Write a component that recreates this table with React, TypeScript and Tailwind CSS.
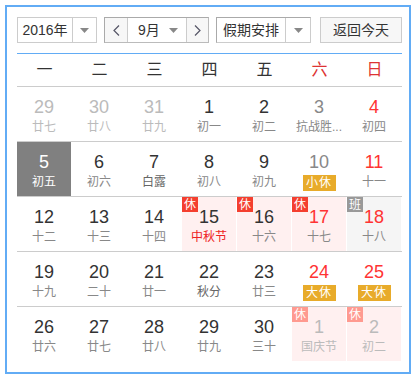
type Day = {
  n: number;
  lunar: string;
  numColor?: string;
  lunarColor?: string;
  bg?: string;
  mark?: 'rest' | 'work' | 'restLight';
  tag?: string;
  selected?: boolean;
};

const weeks: Day[][] = [
  [
    { n: 29, lunar: '廿七', numColor: 'text-[#bbb]', lunarColor: 'text-[#bbb]' },
    { n: 30, lunar: '廿八', numColor: 'text-[#bbb]', lunarColor: 'text-[#bbb]' },
    { n: 31, lunar: '廿九', numColor: 'text-[#bbb]', lunarColor: 'text-[#bbb]' },
    { n: 1, lunar: '初一' },
    { n: 2, lunar: '初二' },
    { n: 3, lunar: '抗战胜...', numColor: 'text-[#888]' },
    { n: 4, lunar: '初四', numColor: 'text-[#f33]' },
  ],
  [
    { n: 5, lunar: '初五', selected: true },
    { n: 6, lunar: '初六' },
    { n: 7, lunar: '白露', lunarColor: 'text-[#666]' },
    { n: 8, lunar: '初八' },
    { n: 9, lunar: '初九' },
    { n: 10, lunar: '初十', numColor: 'text-[#888]', tag: '小休' },
    { n: 11, lunar: '十一', numColor: 'text-[#f33]' },
  ],
  [
    { n: 12, lunar: '十二' },
    { n: 13, lunar: '十三' },
    { n: 14, lunar: '十四' },
    { n: 15, lunar: '中秋节', lunarColor: 'text-[#e22]', bg: 'bg-[#fff0f0]', mark: 'rest' },
    { n: 16, lunar: '十六', bg: 'bg-[#fff0f0]', mark: 'rest' },
    { n: 17, lunar: '十七', numColor: 'text-[#f33]', bg: 'bg-[#fff0f0]', mark: 'rest' },
    { n: 18, lunar: '十八', numColor: 'text-[#f33]', bg: 'bg-[#f5f5f5]', mark: 'work' },
  ],
  [
    { n: 19, lunar: '十九' },
    { n: 20, lunar: '二十' },
    { n: 21, lunar: '廿一' },
    { n: 22, lunar: '秋分', lunarColor: 'text-[#666]' },
    { n: 23, lunar: '廿三' },
    { n: 24, lunar: '廿四', numColor: 'text-[#f33]', tag: '大休' },
    { n: 25, lunar: '廿五', numColor: 'text-[#f33]', tag: '大休' },
  ],
  [
    { n: 26, lunar: '廿六' },
    { n: 27, lunar: '廿七' },
    { n: 28, lunar: '廿八' },
    { n: 29, lunar: '廿九' },
    { n: 30, lunar: '三十' },
    { n: 1, lunar: '国庆节', numColor: 'text-[#bbb]', lunarColor: 'text-[#bbb]', bg: 'bg-[#fff0f0]', mark: 'restLight' },
    { n: 2, lunar: '初二', numColor: 'text-[#bbb]', lunarColor: 'text-[#bbb]', bg: 'bg-[#fff0f0]', mark: 'restLight' },
  ],
];

const weekdays = ['一', '二', '三', '四', '五', '六', '日'];

function Caret() {
  return (
    <svg width="9" height="5" viewBox="0 0 9 5">
      <path d="M0 0 L9 0 L4.5 5 Z" fill="#888" />
    </svg>
  );
}

function Cell({ d }: { d: Day }) {
  let bg = d.bg ?? 'bg-white';
  let num = d.numColor ?? 'text-[#333]';
  let lunar = d.lunarColor ?? 'text-[#888]';
  if (d.selected) {
    bg = 'bg-[#808080]';
    num = 'text-white';
    lunar = 'text-white';
  }

  return (
    <div className={`relative mr-[1px] flex h-[54px] w-[54px] flex-col items-center pt-[10px] ${bg}`}>
      {d.mark === 'rest' && (
        <span className="absolute left-0 top-0 flex h-[15px] w-[16px] items-center justify-center bg-[#f43f2f] text-[12px] leading-none text-white">
          休
        </span>
      )}
      {d.mark === 'restLight' && (
        <span className="absolute left-0 top-0 flex h-[15px] w-[16px] items-center justify-center bg-[#ff9a90] text-[12px] leading-none text-white">
          休
        </span>
      )}
      {d.mark === 'work' && (
        <span className="absolute left-0 top-0 flex h-[15px] w-[16px] items-center justify-center bg-[#999] text-[12px] leading-none text-white">
          班
        </span>
      )}
      <span className={`text-[18px] leading-[20px] ${num}`}>{d.n}</span>
      {d.tag ? (
        <span className="mt-[3px] flex h-[16px] w-[33px] items-center justify-center bg-[#e8ab2a] text-[12px] leading-none tracking-[1px] text-white">
          {d.tag}
        </span>
      ) : (
        <span className={`mt-[2px] whitespace-nowrap text-[12px] leading-[16px] ${lunar}`}>{d.lunar}</span>
      )}
    </div>
  );
}

export default function App() {
  return (
    <div
      className="h-[379px] w-[415px] bg-white pl-[5px] pt-[5px]"
      style={{ fontFamily: '"Liberation Sans", "Noto Sans CJK SC", sans-serif' }}
    >
      <div className="h-[369px] w-[406px] border-2 border-[#62acf5] pl-[10px] pt-[10px]">
        {/* toolbar */}
        <div className="flex h-[26px] w-[385px] text-[14px] text-[#333]">
          <div className="flex w-[80px] border border-[#ccc] bg-white">
            <span className="flex flex-1 items-center justify-center">2016年</span>
            <span className="flex w-[24px] items-center justify-center border-l border-[#ccc]">
              <Caret />
            </span>
          </div>

          <div className="ml-[7px] flex w-[105px] border border-[#aaa] border-b-[#bbb] border-r-[#bbb]">
            <span className="flex w-[22px] items-center justify-center bg-[#f7f7f7]">
              <svg width="7" height="11" viewBox="0 0 7 11">
                <path d="M6 0.5 L1 5.5 L6 10.5" fill="none" stroke="#556" strokeWidth="1.2" />
              </svg>
            </span>
            <span className="flex flex-1 items-center border-x border-[#ccc] bg-white pl-[10px] pr-[8px]">
              <span className="flex-1">9月</span>
              <Caret />
            </span>
            <span className="flex w-[21px] items-center justify-center bg-[#f7f7f7]">
              <svg width="7" height="11" viewBox="0 0 7 11">
                <path d="M1 0.5 L6 5.5 L1 10.5" fill="none" stroke="#556" strokeWidth="1.2" />
              </svg>
            </span>
          </div>

          <div className="ml-[7px] flex w-[95px] border border-[#aaa] border-b-[#ccc] border-r-[#ccc] bg-white">
            <span className="flex flex-1 items-center justify-center">假期安排</span>
            <span className="flex w-[25px] items-center justify-center border-l border-[#ccc]">
              <Caret />
            </span>
          </div>

          <div className="ml-[9px] flex w-[82px] items-center justify-center border border-[#ccc] bg-[#f7f7f7]">
            返回今天
          </div>
        </div>

        <div className="mt-[10px] h-[1px] w-[385px] bg-[#62acf5]" />

        {/* weekday header */}
        <div className="grid h-[33px] w-[385px] grid-cols-7 border-b border-[#ccc] text-[16px]">
          {weekdays.map((w, i) => (
            <div
              key={w}
              className={`flex items-center justify-center ${i >= 5 ? 'text-[#d33]' : 'text-[#333]'}`}
            >
              {w}
            </div>
          ))}
        </div>

        {/* days */}
        <div className="w-[385px]">
          {weeks.map((week, i) => (
            <div
              key={i}
              className={`flex ${i < weeks.length - 1 ? 'border-b border-[#ccc]' : ''}`}
            >
              {week.map((d, j) => (
                <Cell key={j} d={d} />
              ))}
            </div>
          ))}
        </div>
      </div>
    </div>
  );
}
